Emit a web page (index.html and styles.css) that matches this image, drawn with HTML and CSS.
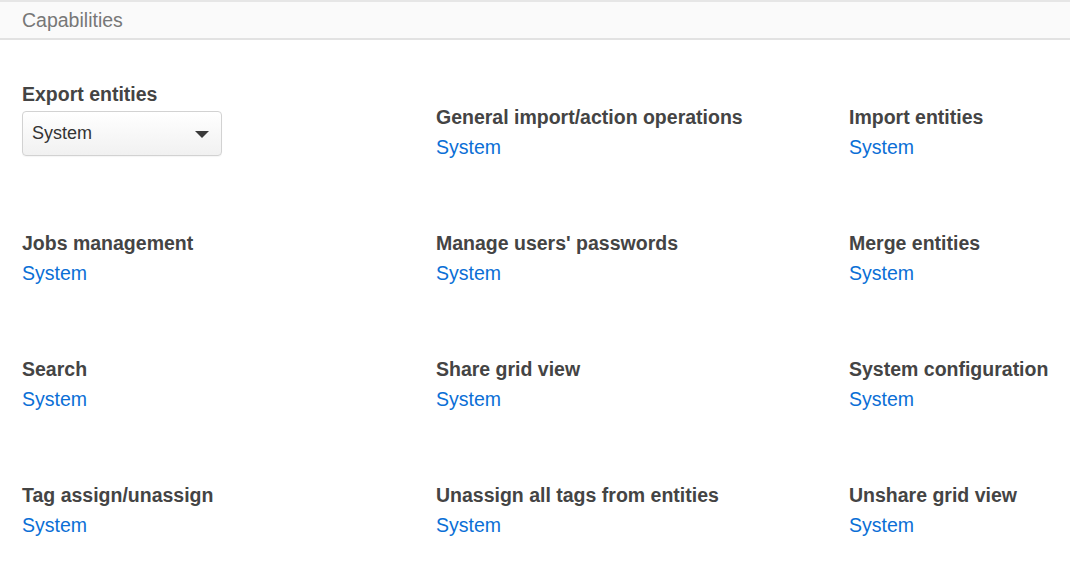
FILE: index.html
```html
<!DOCTYPE html>
<html>
<head>
<meta charset="utf-8">
<link rel="stylesheet" href="styles.css">
</head>
<body>
<div class="section-header">Capabilities</div>
<div class="cap-grid">
  <div class="cap">
    <div class="cap-label">Export entities</div>
    <div class="select">
      <span>System</span>
      <span class="caret"></span>
    </div>
  </div>
  <div class="cap">
    <div class="cap-label">General import/action operations</div>
    <a class="cap-link" href="#">System</a>
  </div>
  <div class="cap">
    <div class="cap-label">Import entities</div>
    <a class="cap-link" href="#">System</a>
  </div>
  <div class="cap">
    <div class="cap-label">Jobs management</div>
    <a class="cap-link" href="#">System</a>
  </div>
  <div class="cap">
    <div class="cap-label">Manage users' passwords</div>
    <a class="cap-link" href="#">System</a>
  </div>
  <div class="cap">
    <div class="cap-label">Merge entities</div>
    <a class="cap-link" href="#">System</a>
  </div>
  <div class="cap">
    <div class="cap-label">Search</div>
    <a class="cap-link" href="#">System</a>
  </div>
  <div class="cap">
    <div class="cap-label">Share grid view</div>
    <a class="cap-link" href="#">System</a>
  </div>
  <div class="cap">
    <div class="cap-label">System configuration</div>
    <a class="cap-link" href="#">System</a>
  </div>
  <div class="cap">
    <div class="cap-label">Tag assign/unassign</div>
    <a class="cap-link" href="#">System</a>
  </div>
  <div class="cap">
    <div class="cap-label">Unassign all tags from entities</div>
    <a class="cap-link" href="#">System</a>
  </div>
  <div class="cap">
    <div class="cap-label">Unshare grid view</div>
    <a class="cap-link" href="#">System</a>
  </div>
</div>
</body>
</html>
```
FILE: styles.css
```css
html, body {
  margin: 0;
  padding: 0;
  background: #ffffff;
  font-family: "Liberation Sans", Arial, sans-serif;
  font-size: 19.5px;
}

.section-header {
  border-top: 2px solid #e6e6e6;
  border-bottom: 2px solid #e2e2e2;
  background: #fafafa;
  line-height: 36px;
  padding-left: 22px;
  color: #777777;
  box-sizing: border-box;
  height: 40px;
}

.cap-grid {
  display: grid;
  grid-template-columns: 414px 413px 1fr;
  row-gap: 74px;
  align-items: end;
  padding: 43px 0 0 22px;
}

.cap {
  display: flex;
  flex-direction: column;
  align-items: flex-start;
}

.cap-label {
  font-weight: bold;
  color: #444444;
  line-height: 22px;
  white-space: nowrap;
}

.cap-link {
  margin-top: 8px;
  line-height: 22px;
  color: #0b6fd6;
  text-decoration: none;
}

.select {
  margin-top: 6px;
  margin-bottom: 2px;
  width: 200px;
  height: 45px;
  box-sizing: border-box;
  border: 1px solid #d2d2d2;
  border-radius: 4px;
  background: linear-gradient(#ffffff, #f1f1f1);
  display: flex;
  align-items: center;
  justify-content: space-between;
  padding: 0 12px 0 9px;
  color: #333333;
  font-size: 18px;
  box-shadow: 0 1px 1px rgba(0,0,0,0.04);
}

.caret {
  width: 0;
  height: 0;
  border-left: 7px solid transparent;
  border-right: 7px solid transparent;
  border-top: 7px solid #3a3a3a;
  margin-top: 1px;
}
```
